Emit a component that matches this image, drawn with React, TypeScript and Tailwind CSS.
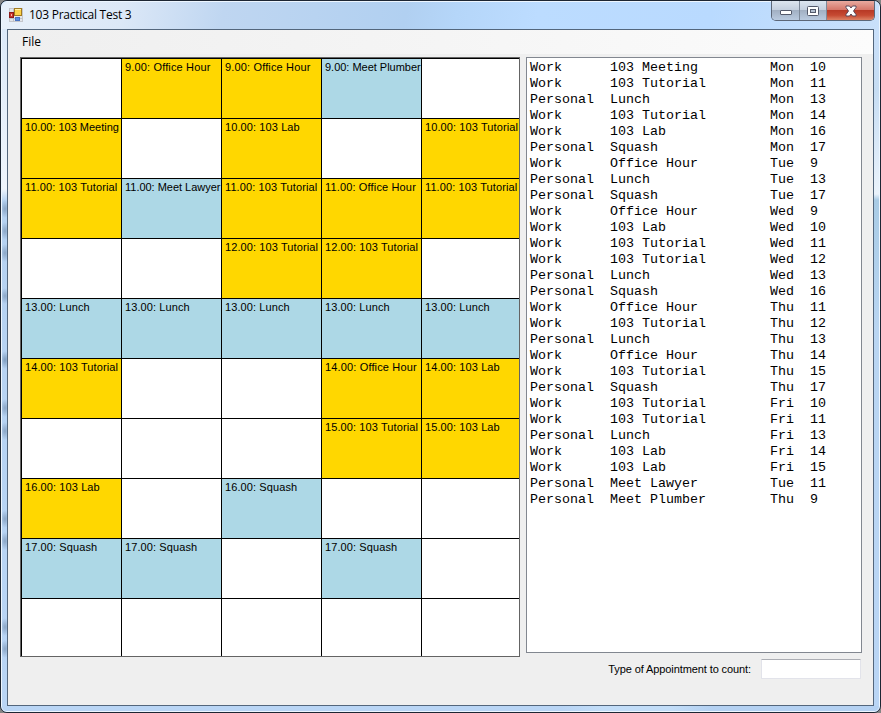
import React from "react";

type Kind = "work" | "personal";
type Cell = [string, Kind] | null;

const w = (t: string): Cell => [t, "work"];
const p = (t: string): Cell => [t, "personal"];

const week: Cell[][] = [
  [null, w("9.00: Office Hour"), w("9.00: Office Hour"), p("9.00: Meet Plumber"), null],
  [w("10.00: 103 Meeting"), null, w("10.00: 103 Lab"), null, w("10.00: 103 Tutorial")],
  [w("11.00: 103 Tutorial"), p("11.00: Meet Lawyer"), w("11.00: 103 Tutorial"), w("11.00: Office Hour"), w("11.00: 103 Tutorial")],
  [null, null, w("12.00: 103 Tutorial"), w("12.00: 103 Tutorial"), null],
  [p("13.00: Lunch"), p("13.00: Lunch"), p("13.00: Lunch"), p("13.00: Lunch"), p("13.00: Lunch")],
  [w("14.00: 103 Tutorial"), null, null, w("14.00: Office Hour"), w("14.00: 103 Lab")],
  [null, null, null, w("15.00: 103 Tutorial"), w("15.00: 103 Lab")],
  [w("16.00: 103 Lab"), null, p("16.00: Squash"), null, null],
  [p("17.00: Squash"), p("17.00: Squash"), null, p("17.00: Squash"), null],
  [null, null, null, null, null],
];

const appointments: [string, string, string, string][] = [
  ["Work", "103 Meeting", "Mon", "10"],
  ["Work", "103 Tutorial", "Mon", "11"],
  ["Personal", "Lunch", "Mon", "13"],
  ["Work", "103 Tutorial", "Mon", "14"],
  ["Work", "103 Lab", "Mon", "16"],
  ["Personal", "Squash", "Mon", "17"],
  ["Work", "Office Hour", "Tue", "9"],
  ["Personal", "Lunch", "Tue", "13"],
  ["Personal", "Squash", "Tue", "17"],
  ["Work", "Office Hour", "Wed", "9"],
  ["Work", "103 Lab", "Wed", "10"],
  ["Work", "103 Tutorial", "Wed", "11"],
  ["Work", "103 Tutorial", "Wed", "12"],
  ["Personal", "Lunch", "Wed", "13"],
  ["Personal", "Squash", "Wed", "16"],
  ["Work", "Office Hour", "Thu", "11"],
  ["Work", "103 Tutorial", "Thu", "12"],
  ["Personal", "Lunch", "Thu", "13"],
  ["Work", "Office Hour", "Thu", "14"],
  ["Work", "103 Tutorial", "Thu", "15"],
  ["Personal", "Squash", "Thu", "17"],
  ["Work", "103 Tutorial", "Fri", "10"],
  ["Work", "103 Tutorial", "Fri", "11"],
  ["Personal", "Lunch", "Fri", "13"],
  ["Work", "103 Lab", "Fri", "14"],
  ["Work", "103 Lab", "Fri", "15"],
  ["Personal", "Meet Lawyer", "Tue", "11"],
  ["Personal", "Meet Plumber", "Thu", "9"],
];

function tracking(text: string) {
  if (text.includes("Meet")) return "tracking-[-0.02px]";
  if (text.includes("Office")) return "tracking-[0.15px]";
  return "tracking-[0.1px]";
}

function AppIcon() {
  return (
    <svg width="14" height="14" viewBox="0 0 14 14" className="block shrink-0">
      <rect x="0.5" y="0.5" width="13" height="13" fill="#e3e5ea" stroke="#c4c6cc" />
      <path d="M4.5 0v14M0 10.5h14" stroke="#c0c2c8" />
      <rect x="5.5" y="0.5" width="7" height="7" fill="#fbd24b" stroke="#a27a20" />
      <path d="M6 1.5h6" stroke="#fff0a8" />
      <rect x="0.5" y="4.5" width="4" height="5" fill="#c8322b" stroke="#8c1b1b" />
      <rect x="2" y="6" width="1" height="2" fill="#f5b5a5" />
      <rect x="6.5" y="9.5" width="4" height="3" fill="#5b8fe0" stroke="#4a74c4" />
    </svg>
  );
}

function CaptionButtons() {
  return (
    <div className="flex h-[20px] w-[104px] overflow-hidden rounded-b-[5px] border border-t-0 border-[#5c6778]">
      <div className="flex w-[28px] items-center justify-center border-r border-[#7d8999] bg-[linear-gradient(#dce5ef_0%,#c3cfde_48%,#a2b0c3_50%,#b9cadf_100%)]">
        <svg width="14" height="8" viewBox="0 0 14 8" className="mt-[5px]">
          <rect x="1.5" y="1.5" width="11" height="4" rx="0.5" fill="#fff" stroke="#53596a" />
        </svg>
      </div>
      <div className="flex w-[27px] items-center justify-center border-r border-[#7d8999] bg-[linear-gradient(#dce5ef_0%,#c3cfde_48%,#a2b0c3_50%,#b9cadf_100%)]">
        <svg width="12" height="10" viewBox="0 0 12 10">
          <rect x="0.5" y="0.5" width="11" height="9" rx="1" fill="#fff" stroke="#53596a" />
          <rect x="3.5" y="3.5" width="5" height="3" fill="#b4c0d0" stroke="#53596a" />
        </svg>
      </div>
      <div className="flex flex-1 items-center justify-center bg-[linear-gradient(#e8aaa0_0%,#d5776a_46%,#b83a26_50%,#c64a32_75%,#dc8265_100%)]">
        <svg width="14" height="12" viewBox="0 0 14 12">
          <path d="M2 1h3.5L7 3l1.500-2H12v1.500L9.500 6 12 9.500V11H8.500L7 9l-1.500 2H2V9.500L4.500 6 2 2.500z" fill="#fff" stroke="#59485a" strokeLinejoin="round" />
        </svg>
      </div>
    </div>
  );
}

const smudges = "bg-[radial-gradient(ellipse_5px_9px_at_3px_180px,#8ba6c6,transparent),radial-gradient(ellipse_5px_9px_at_3px_202px,#8ba6c6,transparent),radial-gradient(ellipse_5px_9px_at_3px_224px,#8ba6c6,transparent),radial-gradient(ellipse_5px_8px_at_3px_267px,#8ba6c6,transparent),radial-gradient(ellipse_5px_9px_at_3px_331px,#7f9dbf,transparent),radial-gradient(ellipse_5px_9px_at_3px_379px,#8ba6c6,transparent),radial-gradient(ellipse_5px_9px_at_3px_402px,#8ba6c6,transparent),radial-gradient(ellipse_5px_9px_at_3px_490px,#8ba6c6,transparent),radial-gradient(ellipse_5px_9px_at_3px_512px,#8ba6c6,transparent),radial-gradient(ellipse_5px_9px_at_3px_598px,#8ba6c6,transparent),radial-gradient(ellipse_5px_9px_at_3px_620px,#8ba6c6,transparent),linear-gradient(#dce9f8,#eff5fc_160px,#b6d2f1_172px,#b9d5f5)]";

export default function App() {
  return (
    <div className="h-[713px] w-[881px] overflow-hidden bg-[#858585] text-black">
      <div className="flex h-full flex-col overflow-hidden rounded-[7px] border border-[#1d2633] bg-[#bdd9f8]">
        <div className="flex h-full flex-col rounded-[6px] border border-[#edf6ff]">
          <header className="flex h-[27px] shrink-0 items-start rounded-t-[5px] bg-[linear-gradient(100deg,#e8f0fa_0px,#dce8f7_120px,#bfd6f1_220px,#b1d0f1_400px,#b5d6f9_450px,#bcdcff_530px,#b9daff_700px,#c9e0fa_870px)] pl-[7px]">
            <div className="mt-[6px]"><AppIcon /></div>
            <h1 className="ml-[6px] mt-[4px] whitespace-nowrap font-['Open_Sans',sans-serif] text-[12px] leading-[18px] tracking-[-0.25px]">103 Practical Test 3</h1>
            <div className="-mt-px ml-auto mr-[4px]"><CaptionButtons /></div>
          </header>
          <div className="flex min-h-0 flex-1">
            <div className={"w-[5px] shrink-0 " + smudges} />
            <main className="flex h-[677px] w-[867px] shrink-0 flex-col border border-[#53667c] bg-[#efefef]">
              <nav className="flex h-[24px] shrink-0 bg-[linear-gradient(90deg,#efefef,#f5f5f5_50%,#fcfcfc)] pl-[14px] font-['Open_Sans',sans-serif] text-[12px] leading-[24px]">
                <span>File</span>
              </nav>
              <div className="flex pl-[12px] pt-[3px]">
                <section className="h-[600px] w-[500px] shrink-0 border border-[#646464]">
                  <div className="grid h-full grid-cols-[100px_100px_100px_100px_97px] grid-rows-[repeat(9,60px)_57px] overflow-hidden border-l border-t border-black bg-white">
                    {week.flatMap((row, r) =>
                      row.map((cell, c) => (
                        <div
                          key={r + "-" + c}
                          className={
                            "overflow-hidden whitespace-nowrap pl-[3px] pt-[2px] font-['Liberation_Sans',Arial,sans-serif] text-[11px] leading-[13px] " +
                            (c < 4 ? "border-r border-black " : "") +
                            (r < 9 ? "border-b border-black " : "") +
                            (cell ? (cell[1] === "work" ? "bg-[#ffd700] " : "bg-[#add8e6] ") + tracking(cell[0]) : "bg-white")
                          }
                        >
                          {cell ? cell[0] : ""}
                        </div>
                      ))
                    )}
                  </div>
                </section>
                <section className="ml-[6px] w-[336px]">
                  <ul className="h-[596px] border border-[#828790] bg-white pl-[3px] pt-[2px] font-['Liberation_Mono','Courier_New',monospace] text-[13.333px] leading-[16px]">
                    {appointments.map(([type, title, day, hour], i) => (
                      <li key={i} className="grid h-[16px] grid-cols-[80px_160px_40px_40px] whitespace-nowrap">
                        <span>{type}</span>
                        <span>{title}</span>
                        <span>{day}</span>
                        <span>{hour}</span>
                      </li>
                    ))}
                  </ul>
                  <div className="mt-[6px] flex h-[20px] items-center justify-end pr-px">
                    <label htmlFor="kind" className="mr-[10px] whitespace-nowrap font-['Liberation_Sans',Arial,sans-serif] text-[11px] leading-[20px] tracking-[-0.1px]">Type of Appointment to count:</label>
                    <input id="kind" className="h-[20px] w-[100px] rounded-[1px] border border-[#e2e3ea] border-t-[#abadb3] bg-white" />
                  </div>
                </section>
              </div>
            </main>
            <div className="flex-1 bg-[linear-gradient(#c9e0fa,#c6dcf3_60px,#eaf2fb_165px,#a9cbe5_171px,#b9d5f2_300px,#b9d5f5)]" />
          </div>
          <footer className="h-[5px] shrink-0 rounded-b-[5px] bg-[linear-gradient(90deg,#b9d5f5,#b9d5f5_560px,#c2ddf8_600px,#c2ddf8_670px,#b4d1f2_710px)]" />
        </div>
      </div>
    </div>
  );
}
